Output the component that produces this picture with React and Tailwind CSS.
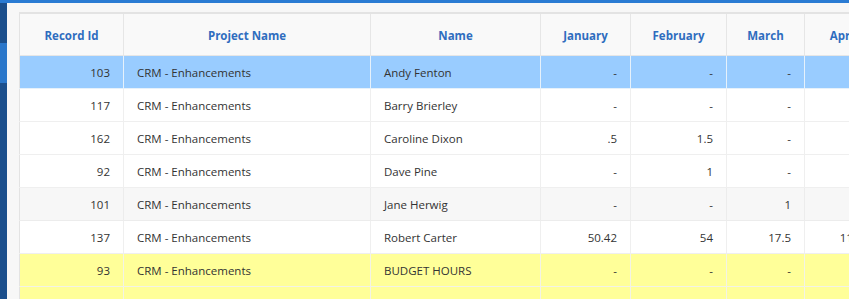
import React from "react";

const cols = [
  { label: "Record Id", w: 104 },
  { label: "Project Name", w: 247 },
  { label: "Name", w: 170 },
  { label: "January", w: 90 },
  { label: "February", w: 96 },
  { label: "March", w: 78 },
  { label: "April", w: 78 },
];
const totalW = cols.reduce((a, c) => a + c.w, 0);

const rows = [
  { id: "103", p: "CRM - Enhancements", name: "Andy Fenton", v: ["-", "-", "-", ""], kind: "sel" },
  { id: "117", p: "CRM - Enhancements", name: "Barry Brierley", v: ["-", "-", "-", ""], kind: "w" },
  { id: "162", p: "CRM - Enhancements", name: "Caroline Dixon", v: [".5", "1.5", "-", ""], kind: "w" },
  { id: "92", p: "CRM - Enhancements", name: "Dave Pine", v: ["-", "1", "-", ""], kind: "w" },
  { id: "101", p: "CRM - Enhancements", name: "Jane Herwig", v: ["-", "-", "1", ""], kind: "g" },
  { id: "137", p: "CRM - Enhancements", name: "Robert Carter", v: ["50.42", "54", "17.5", "112.5"], kind: "w" },
  { id: "93", p: "CRM - Enhancements", name: "BUDGET HOURS", v: ["-", "-", "-", ""], kind: "y" },
  { id: "", p: "", name: "", v: ["", "", "", ""], kind: "y" },
];

const rowBg = {
  sel: "bg-[#99ccff]",
  w: "bg-white",
  g: "bg-[#f7f7f7]",
  y: "bg-[#ffff99]",
};
const cellBorder = {
  sel: "border-[#e6f1fb]",
  w: "border-[#efefef]",
  g: "border-[#ececec]",
  y: "border-[#f3f3e6]",
};

export default function App() {
  return (
    <div
      className="w-[849px] h-[299px] overflow-hidden bg-[#f7f7f7] flex flex-col"
      style={{ fontFamily: '"Open Sans", "Noto Sans", sans-serif' }}
    >
      <div className="h-[3px] bg-[#2a7bd3] shrink-0" />
      <div className="flex flex-1 min-h-0">
        <div className="w-[7px] shrink-0 flex flex-col">
          <div className="h-[40px] bg-[#1b4f8c]" />
          <div className="h-[40px] bg-[#2a77ca]" />
          <div className="flex-1 bg-[#1b4f8c]" />
        </div>
        <div className="flex-1 min-w-0 pl-[12px] pt-[9px] overflow-hidden">
          <table
            className="border-collapse table-fixed border-t-2 border-l border-[#e3e3e3] text-[11.5px] text-[#333]"
            style={{ width: totalW }}
          >
            <colgroup>
              {cols.map((c) => (
                <col key={c.label} style={{ width: c.w }} />
              ))}
            </colgroup>
            <thead>
              <tr className="bg-[#f9f9f9]">
                {cols.map((c) => (
                  <th
                    key={c.label}
                    className="h-[42px] pt-[2px] border-r border-b border-[#e6e6e6] font-bold text-[#2f6dbf] text-center align-middle px-1 whitespace-nowrap"
                  >
                    {c.label}
                  </th>
                ))}
              </tr>
            </thead>
            <tbody>
              {rows.map((r, i) => (
                <tr key={i} className={rowBg[r.kind]}>
                  <td className={`h-[33px] pt-[2px] border-r border-b ${cellBorder[r.kind]} text-right pr-[13px]`}>{r.id}</td>
                  <td className={`pt-[2px] border-r border-b ${cellBorder[r.kind]} pl-[13px] whitespace-nowrap`}>{r.p}</td>
                  <td className={`pt-[2px] border-r border-b ${cellBorder[r.kind]} pl-[13px] whitespace-nowrap`}>{r.name}</td>
                  {r.v.map((x, j) => (
                    <td key={j} className={`pt-[2px] border-r border-b ${cellBorder[r.kind]} text-right pr-[13px] whitespace-nowrap`}>{x}</td>
                  ))}
                </tr>
              ))}
            </tbody>
          </table>
        </div>
      </div>
    </div>
  );
}
